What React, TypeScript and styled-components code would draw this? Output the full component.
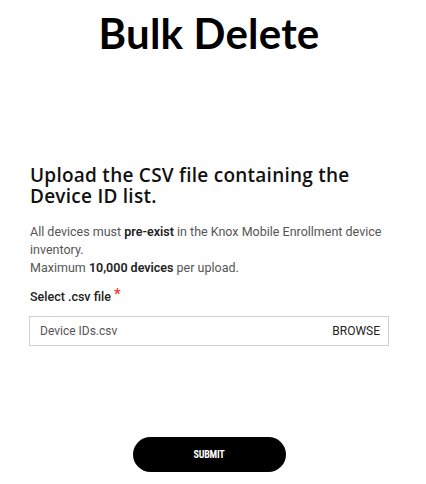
import React from "react";
import styled, { createGlobalStyle } from "styled-components";

const Global = createGlobalStyle`
  html, body { margin: 0; padding: 0; background: #fff; }
  body { font-family: Roboto, "Liberation Sans", sans-serif; }
`;

const Page = styled.div`
  width: 360px;
  margin-left: 29px;
  display: flex;
  flex-direction: column;
`;

const Title = styled.h1`
  margin: 8px 0 0;
  text-align: center;
  font-family: Lato, "Liberation Sans", sans-serif;
  font-weight: 700;
  font-size: 42px;
  line-height: 50px;
  color: #000;
  letter-spacing: 0.2px;
`;

const Heading = styled.h2`
  margin: 107px 0 0 1px;
  font-family: "Open Sans", sans-serif;
  font-weight: 600;
  font-size: 19px;
  line-height: 21px;
  letter-spacing: 0.25px;
  color: #111;
`;

const Description = styled.p`
  margin: 16px 0 0 1px;
  font-size: 12.5px;
  line-height: 18px;
  color: #555;
  b { font-weight: 600; color: #222; }
`;

const Label = styled.div`
  margin: 11px 0 0 1px;
  font-size: 12.5px;
  line-height: 18px;
  font-weight: 500;
  color: #222;
`;

const Required = styled.span`
  color: #e33;
  font-size: 15px;
  vertical-align: top;
  margin-left: 3px;
  position: relative;
  top: -3px;
`;

const FileField = styled.div`
  margin-top: 10px;
  height: 30px;
  box-sizing: border-box;
  border: 1px solid #d0d0d0;
  display: flex;
  align-items: center;
  justify-content: space-between;
  padding: 0 8px 0 10px;
`;

const FileName = styled.span`
  font-size: 12px;
  color: #555;
`;

const Browse = styled.span`
  font-size: 12px;
  color: #222;
  font-weight: 400;
`;

const SubmitRow = styled.div`
  margin-top: 91px;
  display: flex;
  justify-content: center;
`;

const Submit = styled.button`
  width: 153px;
  height: 35px;
  border: none;
  border-radius: 18px;
  background: #000;
  color: #fff;
  font-family: "Roboto Condensed", Roboto, sans-serif;
  font-weight: 700;
  font-size: 10px;
  letter-spacing: -0.2px;
  cursor: pointer;
`;

export default function App() {
  return (
    <>
      <Global />
      <Page>
        <Title>Bulk Delete</Title>
        <Heading>
          Upload the CSV file containing the
          <br />
          Device ID list.
        </Heading>
        <Description>
          All devices must <b>pre-exist</b> in the Knox Mobile Enrollment device inventory.
          <br />
          Maximum <b>10,000 devices</b> per upload.
        </Description>
        <Label>
          Select .csv file<Required>*</Required>
        </Label>
        <FileField>
          <FileName>Device IDs.csv</FileName>
          <Browse>BROWSE</Browse>
        </FileField>
        <SubmitRow>
          <Submit>SUBMIT</Submit>
        </SubmitRow>
      </Page>
    </>
  );
}
